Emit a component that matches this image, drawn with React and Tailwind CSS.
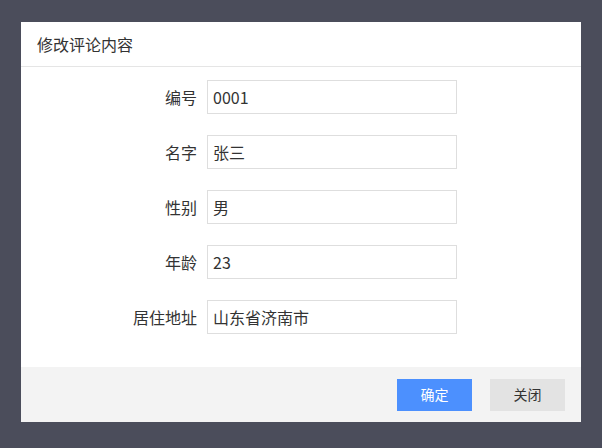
import React, { useState } from "react";

const fields = [
  { label: "编号", value: "0001" },
  { label: "名字", value: "张三" },
  { label: "性别", value: "男" },
  { label: "年龄", value: "23" },
  { label: "居住地址", value: "山东省济南市" },
];

const App = () => {
  const [values, setValues] = useState(fields.map((f) => f.value));

  return (
    <div
      className="w-[602px] h-[448px] bg-[#4b4d5b] pt-[22px] pl-[21px]"
      style={{ fontFamily: '"Noto Sans CJK SC", "Liberation Sans", sans-serif' }}
    >
      <div className="w-[560px] h-[400px] bg-white flex flex-col">
        {/* header */}
        <div className="h-[45px] flex items-center px-4 border-b border-[#e5e5e5] text-[16px] text-[#333]">
          修改评论内容
        </div>

        {/* form */}
        <div className="flex-1 flex flex-col gap-[21px] pt-[13px]">
          {fields.map((f, i) => (
            <div key={f.label} className="flex items-center">
              <label className="w-[176px] text-right text-[16px] text-[#333]">
                {f.label}
              </label>
              <input
                value={values[i]}
                onChange={(e) => {
                  const next = [...values];
                  next[i] = e.target.value;
                  setValues(next);
                }}
                className="ml-[10px] w-[250px] h-[34px] border border-[#dedede] px-[5px] text-[16px] text-[#333] outline-none"
              />
            </div>
          ))}
        </div>

        {/* footer */}
        <div className="h-[55px] bg-[#f3f3f3] flex items-center justify-end gap-[18px] pr-4">
          <button className="w-[75px] h-[32px] bg-[#4c90fe] text-white text-[14px]">
            确定
          </button>
          <button className="w-[75px] h-[32px] bg-[#e3e3e3] text-[#333] text-[14px]">
            关闭
          </button>
        </div>
      </div>
    </div>
  );
};

export default App;
